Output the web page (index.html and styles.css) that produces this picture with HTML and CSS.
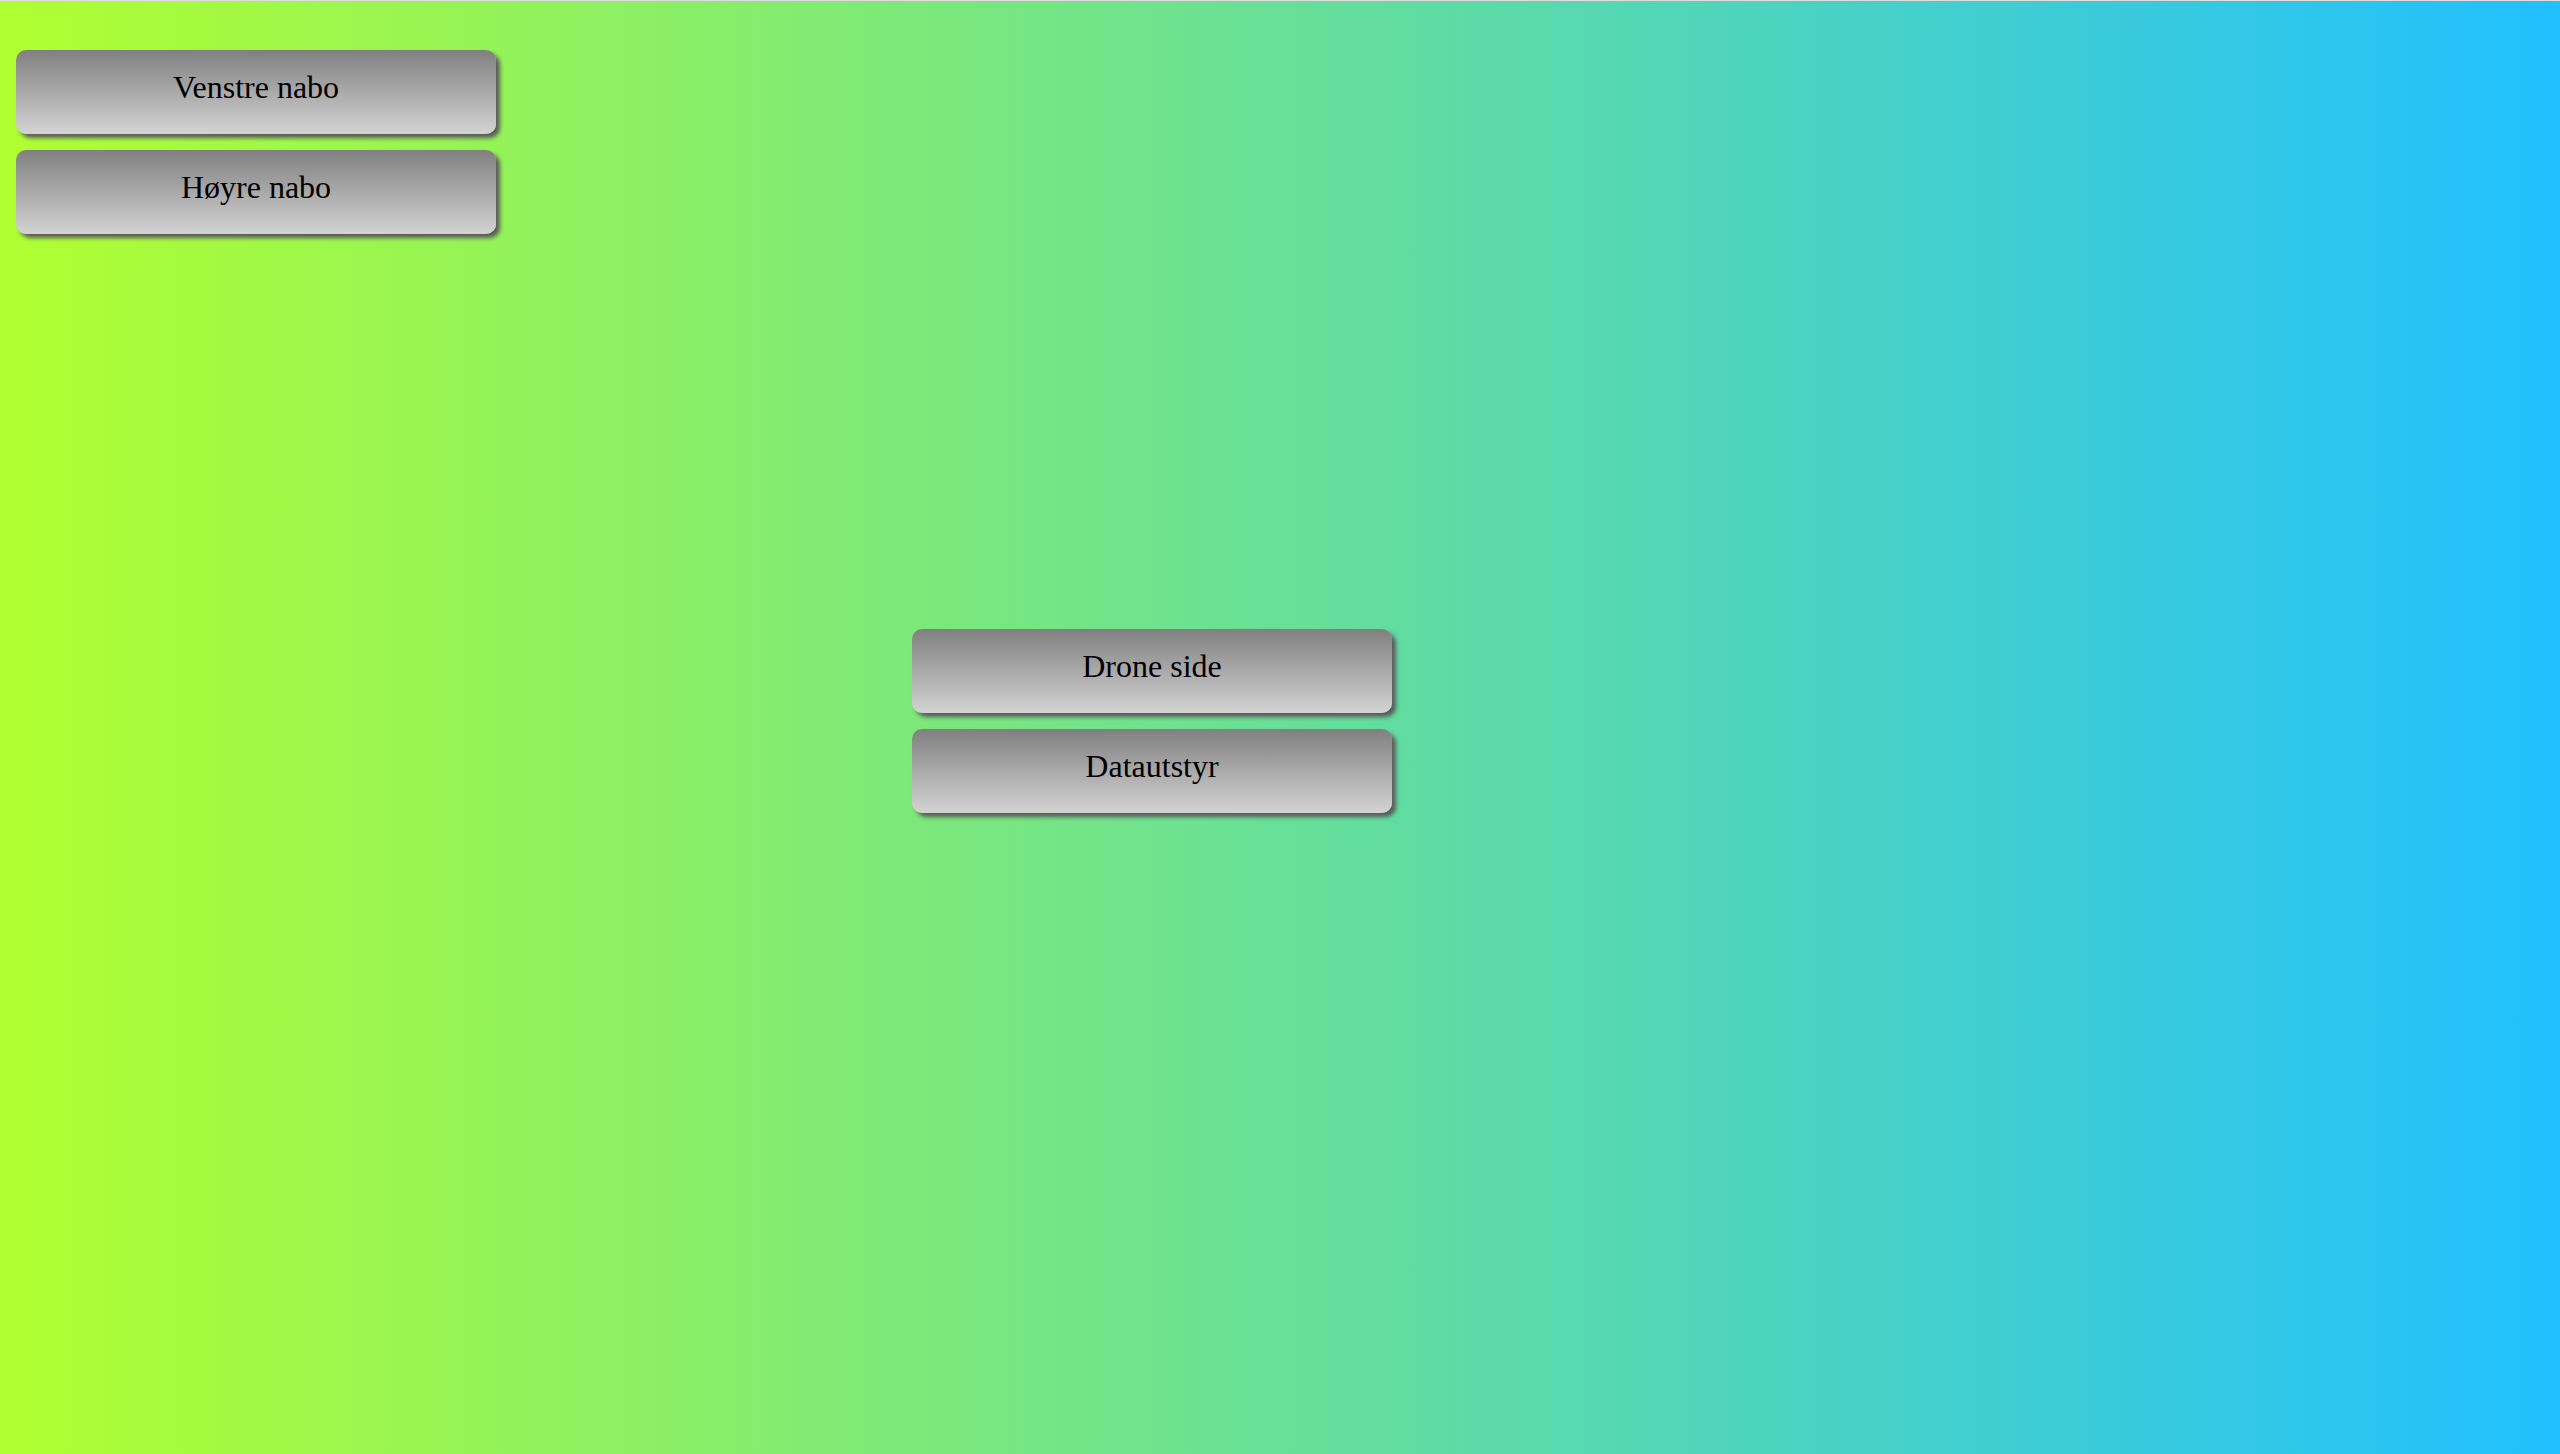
FILE: index.html
```html
<!DOCTYPE html>
<html lang="no">
<head>
<meta charset="utf-8">
<title>Meny</title>
<link rel="stylesheet" href="styles.css">
</head>
<body>
<div class="page">
  <nav class="group group-top">
    <a class="btn" href="#">Venstre nabo</a>
    <a class="btn" href="#">Høyre nabo</a>
  </nav>
  <nav class="group group-center">
    <a class="btn" href="#">Drone side</a>
    <a class="btn" href="#">Datautstyr</a>
  </nav>
</div>
</body>
</html>
```

FILE: styles.css
```css
html, body {
  margin: 0;
  padding: 0;
  height: 100%;
}
body {
  background: linear-gradient(to right, #b0ff30 0%, #20c0ff 100%);
  font-family: "Liberation Serif", "Times New Roman", serif;
  border-top: 1px solid #dedede;
  box-sizing: border-box;
  overflow: hidden;
}
.page {
  display: flex;
  flex-direction: column;
  padding: 49px 0 0 16px;
}
.group {
  display: flex;
  flex-direction: column;
  gap: 16px;
  width: 480px;
}
.group-center {
  margin-top: 395px;
  margin-left: 896px;
}
.btn {
  display: block;
  box-sizing: border-box;
  height: 84px;
  padding-top: 19px;
  text-align: center;
  font-size: 32px;
  line-height: 36px;
  color: #000;
  text-decoration: none;
  border-radius: 10px;
  background: linear-gradient(to bottom, #808080, #d3d3d3);
  box-shadow: 4px 4px 4px #5a5a5a;
}
```
